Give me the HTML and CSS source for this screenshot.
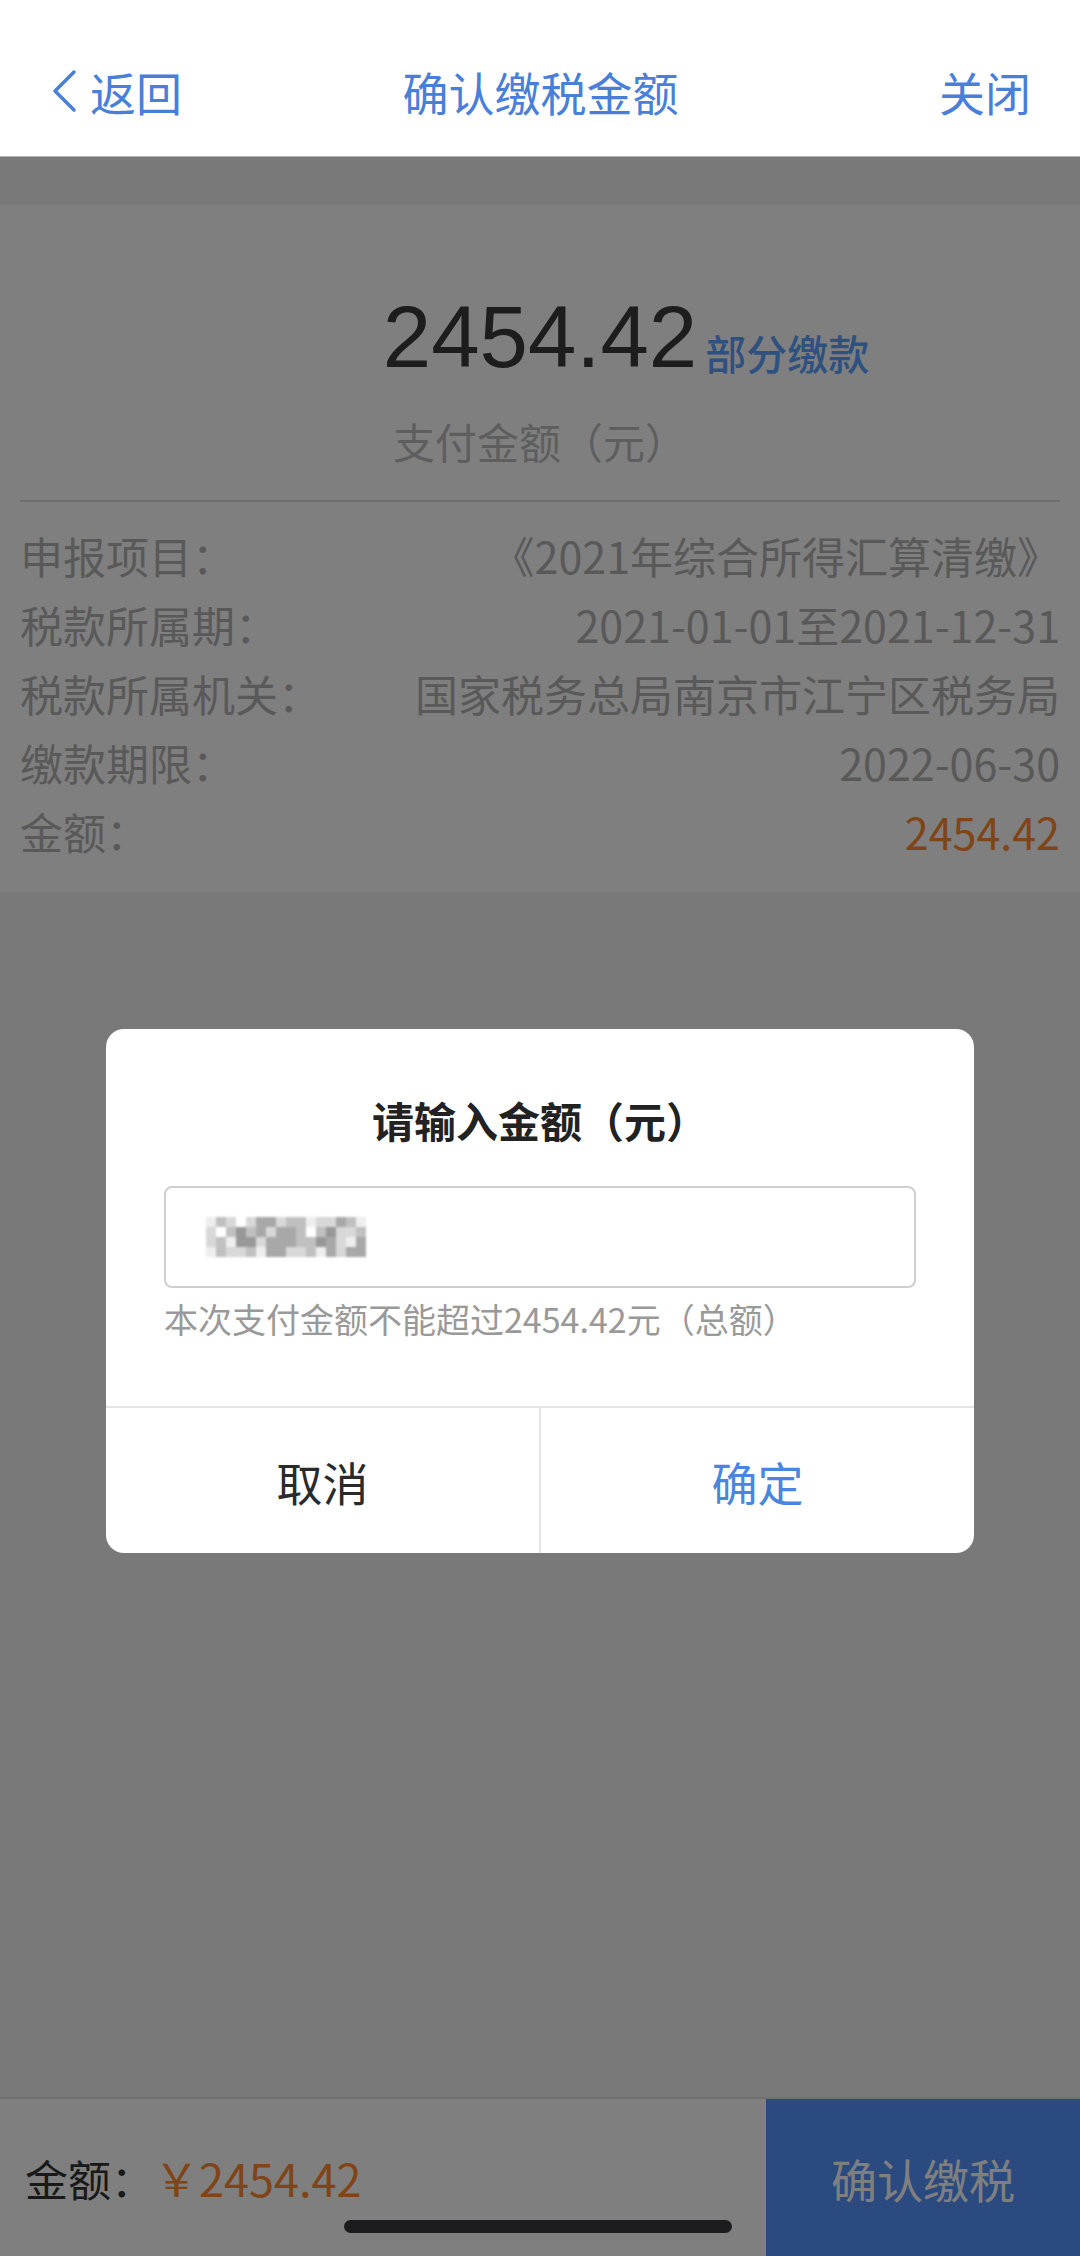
FILE: index.html
```html
<!DOCTYPE html>
<html lang="zh-CN">
<head>
    <meta charset="UTF-8">
    <meta name="viewport" content="width=device-width, initial-scale=1.0">
    <title>确认缴税金额</title>
    <link rel="stylesheet" href="styles.css">
</head>
<body>
<div class="app">
    <header class="topbar">
        <a class="nav-back">
            <svg class="back-icon" width="28" height="44" viewBox="0 0 28 44">
                <polyline points="24,3 5,22 24,41" fill="none" stroke="currentColor" stroke-width="3.5" stroke-linecap="round" stroke-linejoin="round"/>
            </svg>返回
        </a>
        <h1 class="nav-title">确认缴税金额</h1>
        <a class="nav-close">关闭</a>
    </header>

    <main class="page">
        <section class="card">
            <div class="summary">
                <div class="amount">
                    <span class="amount-num">2454.42<span class="tag">部分缴款</span></span>
                </div>
                <p class="amount-label">支付金额（元）</p>
            </div>
            <ul class="info">
                <li><span>申报项目：</span><span>《2021年综合所得汇算清缴》</span></li>
                <li><span>税款所属期：</span><span>2021-01-01至2021-12-31</span></li>
                <li><span>税款所属机关：</span><span>国家税务总局南京市江宁区税务局</span></li>
                <li><span>缴款期限：</span><span>2022-06-30</span></li>
                <li><span>金额：</span><span class="orange">2454.42</span></li>
            </ul>
        </section>
    </main>

    <footer class="paybar">
        <div class="paybar-total">金额：<span class="price">￥2454.42</span></div>
        <button class="pay-btn">确认缴税</button>
    </footer>

    <!-- 弹窗遮罩 -->
    <div class="mask">
        <div class="dialog">
            <h2 class="dialog-title">请输入金额（元）</h2>
            <div class="dialog-body">
                <div class="amount-input">
                    <svg class="mosaic" width="160" height="40" viewBox="0 0 160 40">
                        <g>
                            <rect x="0" y="0" width="10" height="10" fill="#eeeeee"/>
                            <rect x="10" y="0" width="10" height="10" fill="#c0c0c0"/>
                            <rect x="20" y="0" width="10" height="10" fill="#d8d8d8"/>
                            <rect x="30" y="0" width="10" height="10" fill="#ffffff"/>
                            <rect x="40" y="0" width="10" height="10" fill="#d8d8d8"/>
                            <rect x="50" y="0" width="10" height="10" fill="#a8a8a8"/>
                            <rect x="60" y="0" width="10" height="10" fill="#a8a8a8"/>
                            <rect x="70" y="0" width="10" height="10" fill="#d8d8d8"/>
                            <rect x="80" y="0" width="10" height="10" fill="#c0c0c0"/>
                            <rect x="90" y="0" width="10" height="10" fill="#c0c0c0"/>
                            <rect x="100" y="0" width="10" height="10" fill="#eeeeee"/>
                            <rect x="110" y="0" width="10" height="10" fill="#d8d8d8"/>
                            <rect x="120" y="0" width="10" height="10" fill="#d8d8d8"/>
                            <rect x="130" y="0" width="10" height="10" fill="#a8a8a8"/>
                            <rect x="140" y="0" width="10" height="10" fill="#c0c0c0"/>
                            <rect x="150" y="0" width="10" height="10" fill="#eeeeee"/>

                            <rect x="0" y="10" width="10" height="10" fill="#d8d8d8"/>
                            <rect x="10" y="10" width="10" height="10" fill="#ffffff"/>
                            <rect x="20" y="10" width="10" height="10" fill="#c0c0c0"/>
                            <rect x="30" y="10" width="10" height="10" fill="#989898"/>
                            <rect x="40" y="10" width="10" height="10" fill="#c0c0c0"/>
                            <rect x="50" y="10" width="10" height="10" fill="#a8a8a8"/>
                            <rect x="60" y="10" width="10" height="10" fill="#d8d8d8"/>
                            <rect x="70" y="10" width="10" height="10" fill="#a8a8a8"/>
                            <rect x="80" y="10" width="10" height="10" fill="#a8a8a8"/>
                            <rect x="90" y="10" width="10" height="10" fill="#c0c0c0"/>
                            <rect x="100" y="10" width="10" height="10" fill="#ffffff"/>
                            <rect x="110" y="10" width="10" height="10" fill="#c0c0c0"/>
                            <rect x="120" y="10" width="10" height="10" fill="#989898"/>
                            <rect x="130" y="10" width="10" height="10" fill="#d8d8d8"/>
                            <rect x="140" y="10" width="10" height="10" fill="#d8d8d8"/>
                            <rect x="150" y="10" width="10" height="10" fill="#c0c0c0"/>

                            <rect x="0" y="20" width="10" height="10" fill="#d8d8d8"/>
                            <rect x="10" y="20" width="10" height="10" fill="#c0c0c0"/>
                            <rect x="20" y="20" width="10" height="10" fill="#eeeeee"/>
                            <rect x="30" y="20" width="10" height="10" fill="#989898"/>
                            <rect x="40" y="20" width="10" height="10" fill="#989898"/>
                            <rect x="50" y="20" width="10" height="10" fill="#d8d8d8"/>
                            <rect x="60" y="20" width="10" height="10" fill="#a8a8a8"/>
                            <rect x="70" y="20" width="10" height="10" fill="#a8a8a8"/>
                            <rect x="80" y="20" width="10" height="10" fill="#a8a8a8"/>
                            <rect x="90" y="20" width="10" height="10" fill="#c0c0c0"/>
                            <rect x="100" y="20" width="10" height="10" fill="#c0c0c0"/>
                            <rect x="110" y="20" width="10" height="10" fill="#989898"/>
                            <rect x="120" y="20" width="10" height="10" fill="#a8a8a8"/>
                            <rect x="130" y="20" width="10" height="10" fill="#d8d8d8"/>
                            <rect x="140" y="20" width="10" height="10" fill="#eeeeee"/>
                            <rect x="150" y="20" width="10" height="10" fill="#a8a8a8"/>

                            <rect x="0" y="30" width="10" height="10" fill="#eeeeee"/>
                            <rect x="10" y="30" width="10" height="10" fill="#c0c0c0"/>
                            <rect x="20" y="30" width="10" height="10" fill="#d8d8d8"/>
                            <rect x="30" y="30" width="10" height="10" fill="#d8d8d8"/>
                            <rect x="40" y="30" width="10" height="10" fill="#c0c0c0"/>
                            <rect x="50" y="30" width="10" height="10" fill="#eeeeee"/>
                            <rect x="60" y="30" width="10" height="10" fill="#a8a8a8"/>
                            <rect x="70" y="30" width="10" height="10" fill="#a8a8a8"/>
                            <rect x="80" y="30" width="10" height="10" fill="#d8d8d8"/>
                            <rect x="90" y="30" width="10" height="10" fill="#d8d8d8"/>
                            <rect x="100" y="30" width="10" height="10" fill="#c0c0c0"/>
                            <rect x="110" y="30" width="10" height="10" fill="#eeeeee"/>
                            <rect x="120" y="30" width="10" height="10" fill="#a8a8a8"/>
                            <rect x="130" y="30" width="10" height="10" fill="#d8d8d8"/>
                            <rect x="140" y="30" width="10" height="10" fill="#a8a8a8"/>
                            <rect x="150" y="30" width="10" height="10" fill="#a8a8a8"/>
                        </g>
                    </svg>
                </div>
                <p class="hint">本次支付金额不能超过2454.42元（总额）</p>
            </div>
            <div class="dialog-actions">
                <button class="dialog-btn cancel">取消</button>
                <button class="dialog-btn ok">确定</button>
            </div>
        </div>
    </div>

    <div class="home-indicator"></div>
</div>
</body>
</html>
```

FILE: styles.css
```css
* {
    box-sizing: border-box;
}

body {
    margin: 0;
    font-family: "Noto Sans CJK SC", sans-serif;
    color: #333;
    background-color: #f2f2f2;
}

.app {
    position: relative;
    height: 100vh;
    display: flex;
    flex-direction: column;
    overflow: hidden;
}

/* 顶部导航 */
.topbar {
    display: grid;
    grid-template-columns: 1fr auto 1fr;
    align-items: center;
    height: 157px;
    padding: 57px 49px 31px 50px;
    background-color: #fff;
    border-bottom: 1px solid #b4b4b4;
    color: #4a7fd9;
    font-size: 46px;
    line-height: 68px;
}

.nav-back {
    display: flex;
    align-items: center;
}

.back-icon {
    margin-right: 12px;
}

.nav-title {
    margin: 0;
    font-size: 46px;
    font-weight: normal;
}

.nav-close {
    justify-self: end;
}

/* 内容 */
.page {
    flex: 1;
    padding-top: 48px;
}

.card {
    background-color: #fff;
    padding: 0 20px 26px;
}

.summary {
    padding-top: 88px;
    text-align: center;
}

.amount {
    display: flex;
    justify-content: center;
}

.amount-num {
    position: relative;
    font-family: "Liberation Sans", sans-serif;
    font-size: 87px;
    line-height: 87px;
    color: #3b3b3b;
}

.tag {
    position: absolute;
    left: 100%;
    bottom: 7px;
    margin-left: 8px;
    font-family: "Noto Sans CJK SC", sans-serif;
    font-size: 41px;
    line-height: 41px;
    font-weight: 500;
    white-space: nowrap;
    color: #5ca2ff;
}

.amount-label {
    margin: 33px 0 0;
    font-size: 42px;
    line-height: 56px;
    color: #bdbdbd;
    padding-bottom: 31px;
    border-bottom: 2px solid #dddddd;
}

.info {
    list-style: none;
    margin: 0;
    padding: 19px 0 0;
}

.info li {
    display: flex;
    justify-content: space-between;
    font-size: 43px;
    line-height: 69px;
    color: #b3b3b3;
    white-space: nowrap;
}

.orange {
    color: #ff8a30;
}

/* 底部支付栏 */
.paybar {
    display: flex;
    height: 159px;
    background-color: #fff;
    border-top: 2px solid #dedede;
}

.paybar-total {
    flex: 1;
    display: flex;
    align-items: center;
    padding-left: 25px;
    font-size: 43px;
    color: #333;
}

.price {
    font-size: 45px;
    color: #ff8a30;
}

.pay-btn {
    width: 314px;
    border: none;
    background-color: #5694ff;
    color: #fff;
    font-family: inherit;
    font-size: 46px;
}

/* 遮罩和弹窗 */
.mask {
    position: absolute;
    top: 157px;
    left: 0;
    right: 0;
    bottom: 0;
    z-index: 2;
    display: flex;
    justify-content: center;
    align-items: flex-start;
    padding-top: 872px;
    background-color: rgba(0, 0, 0, 0.5);
}

.dialog {
    width: 868px;
    background-color: #fff;
    border-radius: 18px;
    overflow: hidden;
}

.dialog-title {
    margin: 0;
    padding-top: 61px;
    font-size: 42px;
    line-height: 60px;
    font-weight: bold;
    text-align: center;
    color: #222;
}

.dialog-body {
    padding: 36px 58px 65px;
}

.amount-input {
    display: flex;
    align-items: center;
    height: 102px;
    padding-left: 40px;
    border: 2px solid #cfcfcf;
    border-radius: 8px;
}

.mosaic {
    filter: blur(0.8px);
}

.hint {
    margin: 9px 0 0;
    font-size: 34px;
    line-height: 44px;
    color: #999;
}

.dialog-actions {
    display: flex;
    border-top: 2px solid #e6e6e6;
}

.dialog-btn {
    flex: 1;
    height: 145px;
    border: none;
    background: none;
    font-family: inherit;
    font-size: 46px;
}

.dialog-btn.cancel {
    color: #2a2a2a;
    border-right: 2px solid #e6e6e6;
}

.dialog-btn.ok {
    color: #4a86df;
}

.home-indicator {
    position: absolute;
    left: 344px;
    top: 2220px;
    width: 388px;
    height: 13px;
    border-radius: 7px;
    background-color: #1c1c1e;
    z-index: 3;
}
```
